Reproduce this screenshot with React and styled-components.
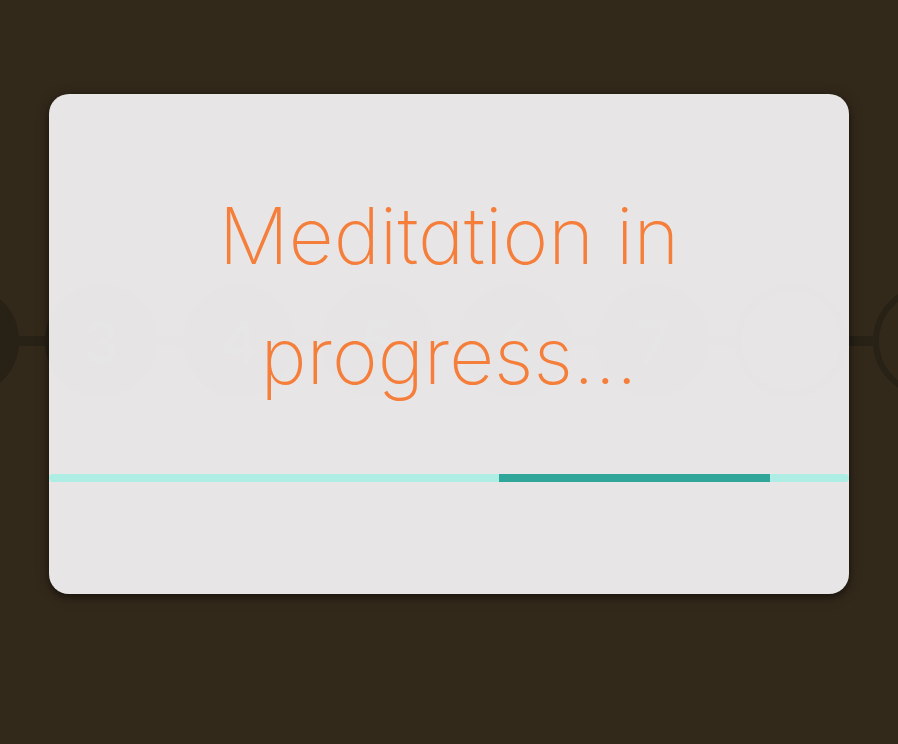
import React from "react";
import styled, { createGlobalStyle } from "styled-components";

const GlobalStyle = createGlobalStyle`
  *, *::before, *::after { box-sizing: border-box; }
  body {
    margin: 0;
    background: #33291b;
    font-family: Lato, "Open Sans", sans-serif;
  }
`;

const Page = styled.div`
  display: grid;
  min-height: 100vh;
  overflow: hidden;
`;

const Track = styled.main`
  grid-area: 1 / 1;
  display: flex;
  align-items: center;
  justify-content: center;
  min-width: 0;
  padding: 0 6px 62px 0;
`;

const Link = styled.span`
  flex: none;
  width: 26px;
  height: 10px;
  background: #282116;
`;

const Step = styled.span`
  flex: none;
  display: flex;
  align-items: center;
  justify-content: center;
  width: 112px;
  height: 112px;
  border: 6px solid #282116;
  border-radius: 50%;
  background: ${(p) => (p.$done ? "#282116" : "transparent")};
  color: #283a2c;
  font-size: 60px;
  font-weight: 700;
`;

const Overlay = styled.div`
  grid-area: 1 / 1;
  z-index: 1;
  min-width: 0;
  padding: 94px 49px;
`;

const Dialog = styled.section`
  max-width: 800px;
  margin: 0 auto;
  padding: 82px 0 112px;
  border-radius: 20px;
  background: rgba(251, 249, 252, 0.9);
  box-shadow: 0 4px 5px rgba(0, 0, 0, 0.24), 0 1px 10px rgba(0, 0, 0, 0.24),
    0 2px 16px rgba(0, 0, 0, 0.16);
`;

const Title = styled.h1`
  max-width: 560px;
  margin: 0 auto 58px;
  color: #f47e3a;
  font-family: Inter, Lato, sans-serif;
  font-feature-settings: "cv11";
  font-size: 78px;
  font-weight: 200;
  line-height: 120px;
  text-align: center;
`;

const Progress = styled.div`
  display: flex;
  height: 8px;
  overflow: hidden;
  border-radius: 4px;
  background: #aeede4;
`;

const Runner = styled.span`
  width: 33.9%;
  margin-left: 56.2%;
  background: #2fa699;
`;

const steps = [
  { label: "", done: true },
  { label: "3", done: true },
  { label: "4", done: true },
  { label: "5", done: true },
  { label: "6", done: true },
  { label: "7", done: true },
  { label: "", done: false },
  { label: "", done: false },
];

export default function App() {
  return (
    <>
      <GlobalStyle />
      <Page>
        <Track aria-hidden="true">
          {steps.map((step, i) => (
            <React.Fragment key={i}>
              {i > 0 && <Link />}
              <Step $done={step.done}>{step.label}</Step>
            </React.Fragment>
          ))}
        </Track>
        <Overlay>
          <Dialog role="dialog" aria-labelledby="status-title">
            <Title id="status-title">Meditation in progress...</Title>
            <Progress role="progressbar" aria-labelledby="status-title">
              <Runner />
            </Progress>
          </Dialog>
        </Overlay>
      </Page>
    </>
  );
}
